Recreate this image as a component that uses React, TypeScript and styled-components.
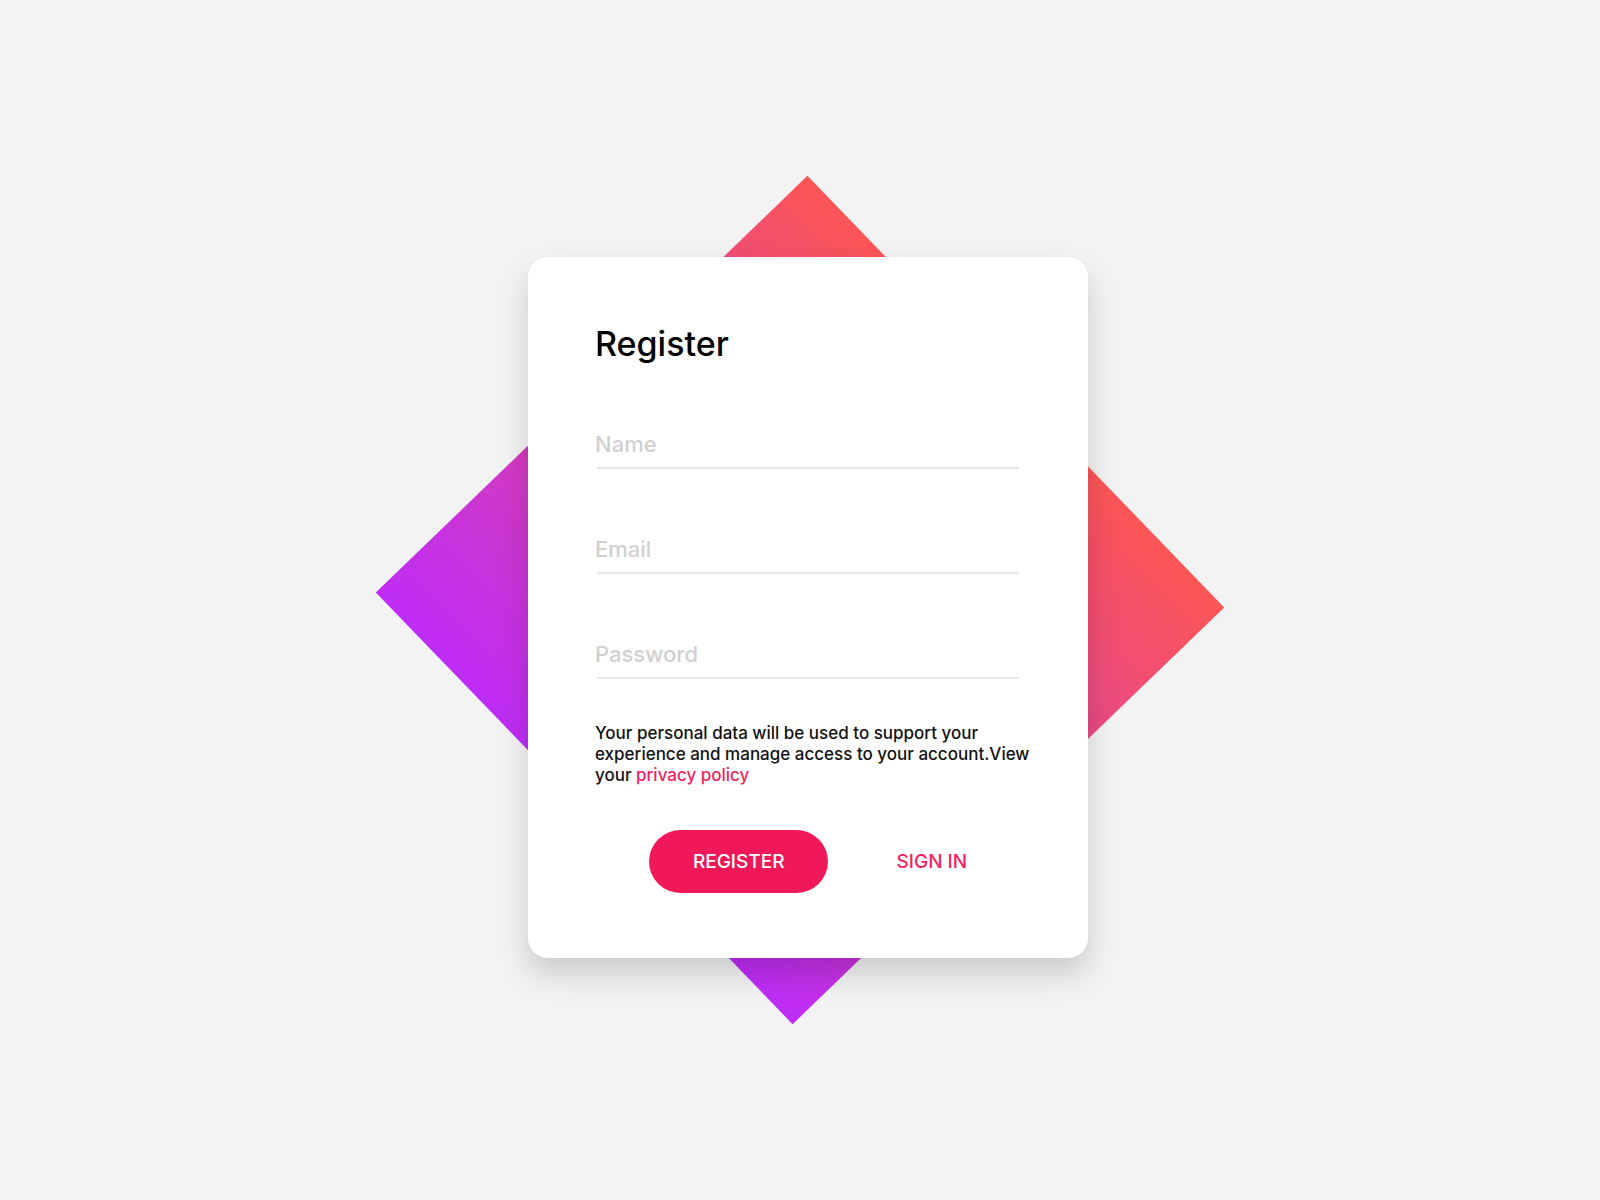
import React from "react";
import styled, { createGlobalStyle } from "styled-components";

const GlobalStyle = createGlobalStyle`
  *, *::before, *::after { box-sizing: border-box; }
  body {
    margin: 0;
    background: #f3f3f3;
    font-family: Inter, "Liberation Sans", sans-serif;
  }
`;

const Scene = styled.main`
  display: grid;
  place-items: center;
  min-height: 100vh;
  overflow: hidden;
`;

const Diamond = styled.div`
  grid-area: 1 / 1;
  width: 600px;
  aspect-ratio: 1;
  background: linear-gradient(to top, #be2df6, #fc5556);
  transform: rotate(46deg);
`;

const Card = styled.form`
  grid-area: 1 / 1;
  z-index: 1;
  display: flex;
  flex-direction: column;
  width: 100%;
  max-width: 560px;
  margin: 15px 0 0 16px;
  padding: 66px 67px 65px;
  border-radius: 20px;
  background: #fff;
  box-shadow: 0 16px 30px rgba(0, 0, 0, 0.17);
`;

const Title = styled.h1`
  margin: 0 0 56px;
  font-size: 34px;
  line-height: 42px;
  font-weight: 500;
  color: #000;
`;

const Fields = styled.div`
  display: flex;
  flex-direction: column;
  gap: 57px;
`;

const Field = styled.label`
  display: block;

  &::after {
    content: "";
    display: block;
    height: 2px;
    margin: 0 2px;
    background: #e8e8e8;
  }
`;

const Input = styled.input`
  display: block;
  width: 100%;
  height: 46px;
  padding: 0;
  border: 0;
  outline: 0;
  background: transparent;
  font: 500 22px/28px Inter, "Liberation Sans", sans-serif;
  color: #111;

  &::placeholder {
    color: #d0d0d0;
    opacity: 1;
  }
`;

const Notice = styled.p`
  margin: 44px -12px 44px 0;
  font-size: 17px;
  line-height: 21px;
  font-weight: 500;
  color: #111;
`;

const PolicyLink = styled.a`
  color: #f41f60;
  text-decoration: none;
`;

const Actions = styled.div`
  display: flex;
  justify-content: center;
  gap: 68px;
`;

const Action = styled.button<{ $filled?: boolean }>`
  height: 63px;
  padding: ${(p) => (p.$filled ? "0 44px" : "0")};
  border: 0;
  border-radius: 32px;
  background: ${(p) => (p.$filled ? "#f01858" : "transparent")};
  color: ${(p) => (p.$filled ? "#fff" : "#f41f60")};
  font: 500 19px/24px Inter, "Liberation Sans", sans-serif;
  cursor: pointer;
`;

const fields = [
  { name: "Name", type: "text" },
  { name: "Email", type: "email" },
  { name: "Password", type: "password" },
];

export default function App() {
  return (
    <>
      <GlobalStyle />
      <Scene>
        <Diamond />
        <Card onSubmit={(e) => e.preventDefault()}>
          <Title>Register</Title>
          <Fields>
            {fields.map((f) => (
              <Field key={f.name}>
                <Input type={f.type} aria-label={f.name} placeholder={f.name} />
              </Field>
            ))}
          </Fields>
          <Notice>
            Your personal data will be used to support your experience and manage access to your
            account.View your <PolicyLink href="#privacy">privacy policy</PolicyLink>
          </Notice>
          <Actions>
            <Action type="submit" $filled>
              REGISTER
            </Action>
            <Action type="button">SIGN IN</Action>
          </Actions>
        </Card>
      </Scene>
    </>
  );
}
